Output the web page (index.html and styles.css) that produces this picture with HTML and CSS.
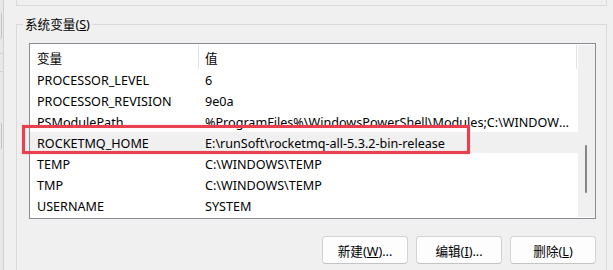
FILE: index.html
```html
<!DOCTYPE html>
<html lang="zh-CN">
<head>
    <meta charset="UTF-8">
    <meta name="viewport" content="width=device-width, initial-scale=1.0">
    <title>系统变量</title>

    <link rel="stylesheet" href="styles.css">
</head>
<body>

    <div class="window">
        <!-- edge of the window behind -->
        <div class="edge">
            <div class="edge-btn"></div>
            <div class="edge-line"></div>
            <div class="edge-line"></div>
            <div class="edge-btn edge-btn-low"></div>
        </div>

        <div class="content">
            <div class="prevGroup"></div>

            <fieldset class="group">
                <legend>系统变量(<u>S</u>)</legend>

                <div class="listbox">
                    <div class="list">
                        <div class="listHeader">
                            <div class="colName">变量</div>
                            <div class="colValue">值</div>
                        </div>
                        <div class="row">
                            <div class="colName">PROCESSOR_LEVEL</div>
                            <div class="colValue">6</div>
                        </div>
                        <div class="row">
                            <div class="colName">PROCESSOR_REVISION</div>
                            <div class="colValue">9e0a</div>
                        </div>
                        <div class="row">
                            <div class="colName">PSModulePath</div>
                            <div class="colValue">%ProgramFiles%\WindowsPowerShell\Modules;C:\WINDOWS\system32\WindowsPowerShell\v1.0\Modules</div>
                        </div>
                        <div class="row selected">
                            <div class="colName">ROCKETMQ_HOME</div>
                            <div class="colValue">E:\runSoft\rocketmq-all-5.3.2-bin-release</div>
                        </div>
                        <div class="row">
                            <div class="colName">TEMP</div>
                            <div class="colValue">C:\WINDOWS\TEMP</div>
                        </div>
                        <div class="row">
                            <div class="colName">TMP</div>
                            <div class="colValue">C:\WINDOWS\TEMP</div>
                        </div>
                        <div class="row">
                            <div class="colName">USERNAME</div>
                            <div class="colValue">SYSTEM</div>
                        </div>
                    </div>
                    <div class="scrollbar">
                        <div class="thumb"></div>
                    </div>

                    <!-- red annotation box -->
                    <div class="mark"></div>
                </div>

                <div class="buttons">
                    <button class="btn" type="button">新建(<u>W</u>)...</button>
                    <button class="btn" type="button">编辑(<u>I</u>)...</button>
                    <button class="btn" type="button">删除(<u>L</u>)</button>
                </div>
            </fieldset>
        </div>
    </div>

</body>
</html>
```

FILE: styles.css
```css
body {
    margin: 0;
    background-color: #f0f0f0;
    font-family: "Noto Sans", "Noto Sans CJK SC", sans-serif;
    font-size: 12.6px;
    color: #000;
}

.window {
    display: flex;
    height: 270px;
    overflow: hidden;
}

/* Window behind, cut off at the left */
.edge {
    flex: none;
    width: 3px;
    background-color: #e8e8e8;
    border-right: 1px solid #d2d2d2;
    display: flex;
    flex-direction: column;
}

.edge-btn {
    width: 1px;
    height: 26px;
    margin-top: 13px;
    border-right: 1px solid #c2c2c2;
    border-radius: 0 2px 2px 0;
}

.edge-btn-low {
    margin-top: 51px;
}

.edge-line {
    height: 1px;
    background-color: #d2d2d2;
    margin-top: 14px;
}

.edge-line + .edge-line {
    margin-top: 17px;
}

.content {
    flex: 1;
    min-width: 0;
    padding-left: 12px;
}

/* Bottom of the user variables group */
.prevGroup {
    width: 591px;
    height: 6px;
    box-sizing: border-box;
    border: 1px solid #dadada;
    border-top: none;
}

.group {
    width: 591px;
    min-width: 0;
    box-sizing: border-box;
    margin: 9px 0 0 0;
    padding: 0 10px 0 12px;
    border: 1px solid #dadada;
    min-height: 300px;
}

.group legend {
    margin-left: -6px;
    padding: 0 2px;
    line-height: 19px;
}

.listbox {
    position: relative;
    display: flex;
    height: 176px;
    box-sizing: border-box;
    margin-top: 9px;
    border: 1px solid #8b8b93;
    background-color: #fff;
}

.list {
    flex: 1;
    min-width: 0;
}

.listHeader {
    display: flex;
    height: 25px;
    align-items: stretch;
    padding-top: 1px;
    box-sizing: border-box;
}

.listHeader .colName,
.listHeader .colValue {
    display: flex;
    align-items: center;
    border-right: 1px solid #e3e3e3;
}

.listHeader .colValue {
    margin-right: 1px;
}

.colName {
    flex: none;
    width: 169px;
    box-sizing: border-box;
    padding-left: 7px;
    white-space: nowrap;
}

.colValue {
    flex: 1;
    min-width: 0;
    padding-left: 6px;
    padding-right: 7px;
    white-space: nowrap;
    overflow: hidden;
    text-overflow: ellipsis;
}

.row {
    display: flex;
    height: 21px;
    align-items: center;
    padding-top: 1px;
    box-sizing: border-box;
}

.row.selected {
    background-color: #f0f0f0;
}

.scrollbar {
    flex: none;
    width: 17px;
    margin: 1px 0;
    background-color: #f0f0f0;
}

.thumb {
    width: 2px;
    height: 48px;
    margin: 100px 0 0 7px;
    background-color: #858585;
    border-radius: 1px;
}

.mark {
    position: absolute;
    left: -8px;
    top: 81px;
    width: 448px;
    height: 29px;
    box-sizing: border-box;
    border: 3px solid #e8404f;
    box-shadow: 0 0 1px rgba(232, 64, 79, 0.5), inset 0 0 1px rgba(232, 64, 79, 0.5);
}

.buttons {
    display: flex;
    justify-content: flex-end;
    gap: 8px;
    margin-top: 17px;
}

.btn {
    width: 86px;
    height: 28px;
    padding: 0;
    background-color: #fdfdfd;
    border: 1px solid #d3d3d3;
    border-bottom-color: #c4c4c4;
    border-radius: 4px;
    font-family: "Noto Sans", "Noto Sans CJK SC", sans-serif;
    font-size: 12.6px;
    color: #000;
    cursor: pointer;
}

.btn:hover {
    background-color: #f5f5f5;
}
```
